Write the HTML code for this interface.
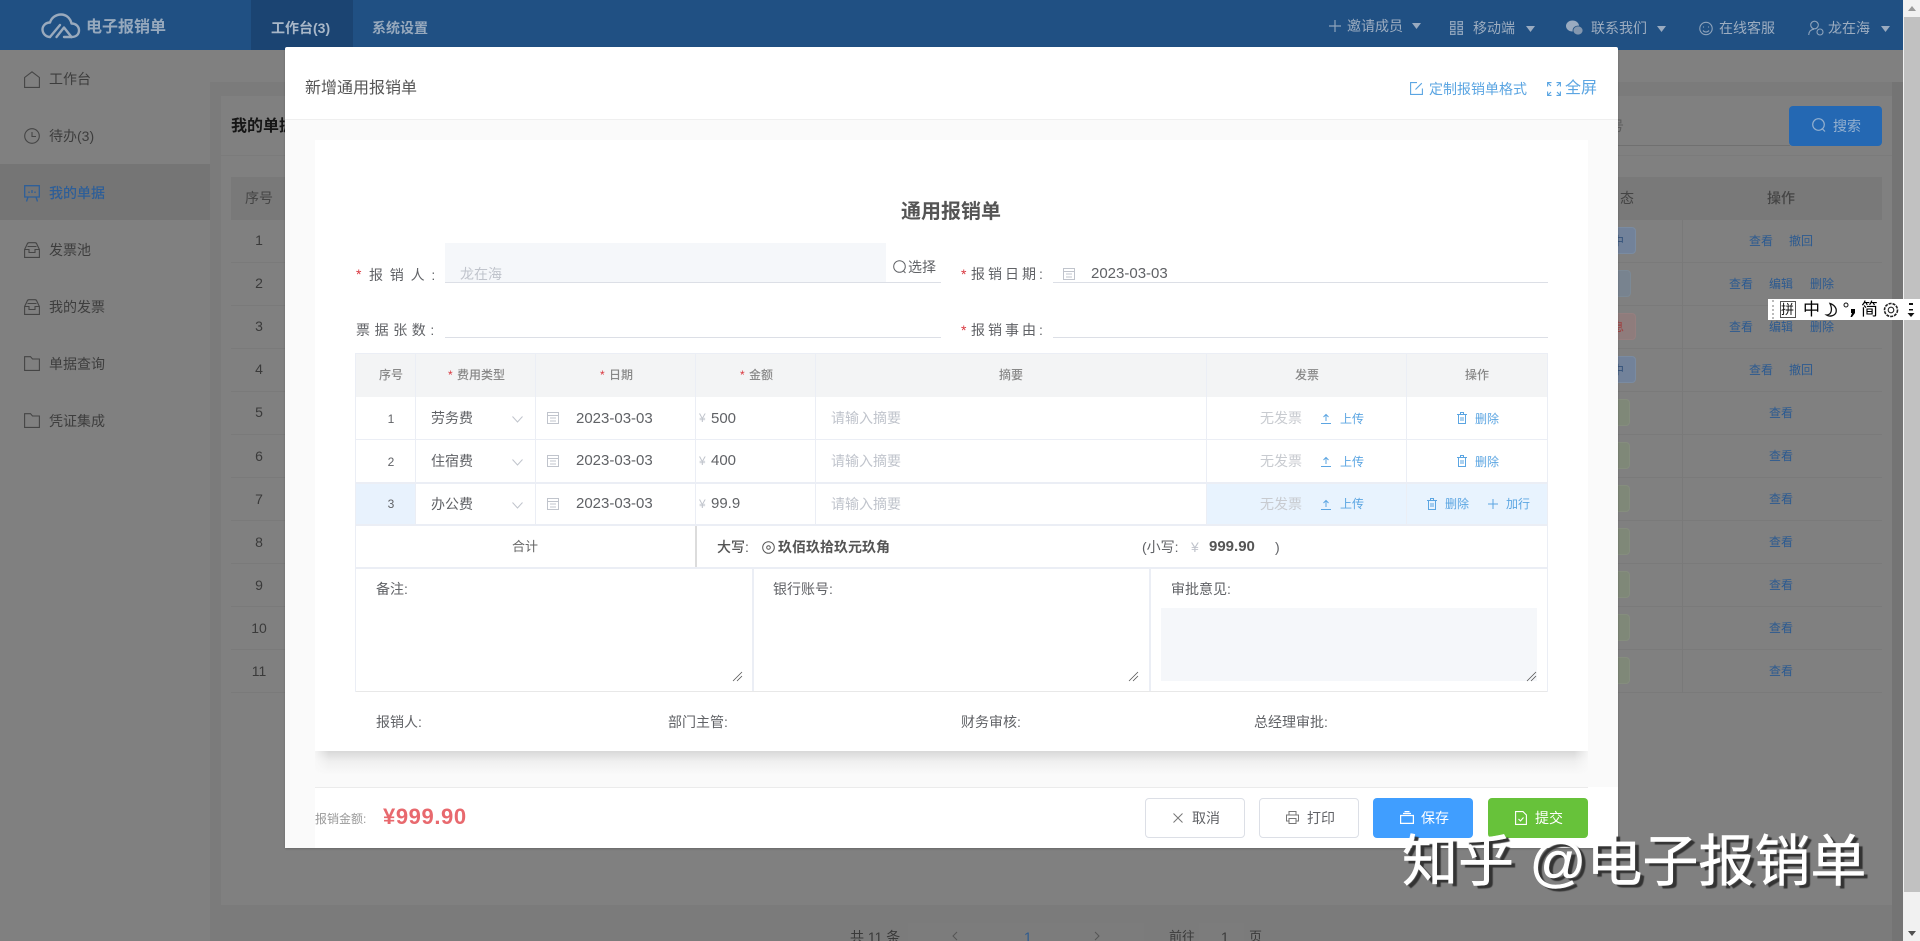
<!DOCTYPE html>
<html lang="zh"><head><meta charset="utf-8"><title>新增通用报销单</title>
<style>
*{box-sizing:border-box}
html,body{margin:0;padding:0;width:1920px;height:941px;overflow:hidden;background:#7f7f7f}
body{position:relative;font-family:"Liberation Sans","Noto Sans CJK SC",sans-serif;font-size:14px;color:#606266}
div{position:absolute}
.t{position:absolute;white-space:nowrap;line-height:20px;height:20px}
.c{transform:translateX(-50%)}
svg{position:absolute;overflow:visible;fill:none}
.nav{color:#9dadc0}
.s{color:#3d3d3d}
.ml{color:#2c5a90;font-size:12px}
.n{color:#3a3a3a}
.th{font-size:12px;color:#888;font-weight:500}
.r{color:#d9363e;font-size:12px}
.lab{color:#606266}
.gr{color:#c0c4cc}
.bl{color:#5ba5e2;font-size:12px}
.ln{background:#ebeef5}
.tag{border-radius:4px;left:1600px;height:27px}
.d{font-size:15px}
</style></head><body>

<!-- header -->
<div style="left:0;top:0;width:1904px;height:50px;background:#205083"></div>
<div style="left:251px;top:0;width:102px;height:50px;background:#1b4472"></div>
<svg style="left:41px;top:13px" width="40" height="26" stroke="#9aaabd" stroke-width="2.4" stroke-linecap="round" stroke-linejoin="round"><path d="M9 24C4.500 24 1.500 20 1.500 16.500S4.500 9.500 9 9.500C10.500 4.500 15 1.500 20 1.500 25.500 1.500 29.500 5.500 30.500 10.500 35 10.500 38 13.500 38 17.500S35 24 30.500 24H23"/><path d="M9 24L19 12"/><path d="M15.500 24L23 14.500 30.500 24"/></svg>
<span class="t nav" style="left:86px;top:18px;font-size:16px;font-weight:700;color:#97a9bd">电子报销单</span>
<span class="t nav" style="left:271px;top:18px;font-weight:700;color:#a8b7c8">工作台(3)</span>
<span class="t nav" style="left:372px;top:18px;font-weight:700;color:#97a9bd">系统设置</span>

<svg style="left:1328px;top:19px" width="14" height="14" stroke="#8ea3bb" stroke-width="1.2"><path d="M7 1V13M1 7H13"/></svg>
<span class="t nav" style="left:1347px;top:16px">邀请成员</span>
<svg style="left:1412px;top:23px" width="9" height="6"><path d="M0 0H9L4.500 6Z" fill="#9aabc0"/></svg>
<svg style="left:1450px;top:21px" width="13" height="14" stroke="#8ea3bb" stroke-width="1.2"><path d="M.6.600H5V3.500H.6ZM8 .6H12.400V3.500H8ZM.6 5.500H5V8.500H.6ZM8 5.500H12.400V8.500H8ZM.6 10.500H5V13.400H.6ZM8 10.500H12.400V13.400H8Z"/></svg>
<span class="t nav" style="left:1473px;top:18px">移动端</span>
<svg style="left:1526px;top:26px" width="9" height="6"><path d="M0 0H9L4.500 6Z" fill="#9aabc0"/></svg>
<svg style="left:1566px;top:20px" width="17" height="16"><ellipse cx="6.500" cy="6" rx="6.500" ry="5.500" fill="#9aabc0"/><ellipse cx="12" cy="10.500" rx="5" ry="4.500" fill="#8397af" stroke="#205083" stroke-width=".8"/></svg>
<span class="t nav" style="left:1591px;top:18px">联系我们</span>
<svg style="left:1657px;top:26px" width="9" height="6"><path d="M0 0H9L4.500 6Z" fill="#9aabc0"/></svg>
<svg style="left:1699px;top:21px" width="14" height="15" stroke="#8ea3bb" stroke-width="1.100"><circle cx="7" cy="7.500" r="6.200"/><path d="M4 9.500C5.500 11.500 8.500 11.500 10 9.500M4.500 5.500V6.500M9.500 5.500V6.500"/></svg>
<span class="t nav" style="left:1719px;top:18px">在线客服</span>
<svg style="left:1808px;top:20px" width="16" height="16" stroke="#8ea3bb" stroke-width="1.100"><circle cx="6.500" cy="5" r="3.800"/><path d="M.7 15C1 11 3 9.500 6 9.200"/><circle cx="12" cy="12" r="3"/></svg>
<span class="t nav" style="left:1828px;top:18px">龙在海</span>
<svg style="left:1881px;top:26px" width="9" height="6"><path d="M0 0H9L4.500 6Z" fill="#9aabc0"/></svg>

<!-- sidebar -->
<div style="left:0;top:50px;width:210px;height:891px;background:#808080"></div>
<div style="left:0;top:164px;width:210px;height:56px;background:#757575"></div>
<svg style="left:24px;top:71px" width="16" height="17" stroke="#454545" stroke-width="1.100"><path d="M.6 16.400V6.500L8 .8 15.400 6.500V16.400Z"/></svg>
<span class="t s" style="left:49px;top:69px">工作台</span>
<svg style="left:24px;top:128px" width="16" height="16" stroke="#454545" stroke-width="1.100"><circle cx="8" cy="8" r="7.300"/><path d="M8 4V8.500H12"/></svg>
<span class="t s" style="left:49px;top:126px">待办(3)</span>
<svg style="left:24px;top:185px" width="16" height="17" stroke="#2e5f99" stroke-width="1.300"><path d="M.7.700H15.300V12H.7ZM4 12L2.500 16.500M12 12L13.500 16.500M5 8V6.500M8 8V5M11 8V6.500"/></svg>
<span class="t" style="left:49px;top:183px;color:#2d5e98;font-weight:500">我的单据</span>
<svg style="left:24px;top:242px" width="16" height="16" stroke="#454545" stroke-width="1.100"><path d="M.6 15.400V7.500L3 2.500Q3.500.7 5 .7H11Q12.500.7 13 2.500L15.400 7.500V15.400ZM.6 7.500H5V10.500H11V7.500H15.400M3.500 4.500H12.500"/></svg>
<span class="t s" style="left:49px;top:240px">发票池</span>
<svg style="left:24px;top:299px" width="16" height="16" stroke="#454545" stroke-width="1.100"><path d="M.6 15.400V7.500L3 2.500Q3.500.7 5 .7H11Q12.500.7 13 2.500L15.400 7.500V15.400ZM.6 7.500H5V10.500H11V7.500H15.400M3.500 4.500H12.500"/></svg>
<span class="t s" style="left:49px;top:297px">我的发票</span>
<svg style="left:24px;top:356px" width="16" height="15" stroke="#454545" stroke-width="1.100"><path d="M.6 14.400V.7H6.500L8.500 3H15.400V14.400Z"/></svg>
<span class="t s" style="left:49px;top:354px">单据查询</span>
<svg style="left:24px;top:413px" width="16" height="15" stroke="#454545" stroke-width="1.100"><path d="M.6 14.400V.7H6.500L8.500 3H15.400V14.400Z"/></svg>
<span class="t s" style="left:49px;top:411px">凭证集成</span>

<!-- main -->
<div style="left:210px;top:50px;width:1694px;height:32px;background:#808080"></div>
<div style="left:210px;top:82px;width:1694px;height:859px;background:#7b7b7b"></div>
<div style="left:221px;top:96px;width:1671px;height:809px;background:#808080"></div>
<div style="left:221px;top:155px;width:1671px;height:1px;background:#7b7b7b"></div>
<div style="left:1892px;top:82px;width:12px;height:859px;background:#747474"></div>
<span class="t" style="left:231px;top:117px;font-size:16px;font-weight:700;color:#161616">我的单据</span>
<div style="left:1560px;top:145px;width:230px;height:1px;background:#707070"></div>
<span class="t" style="left:1610px;top:116px;color:#5d5d5d">号</span>
<div style="left:1789px;top:106px;width:93px;height:40px;background:#2468b3;border-radius:4px"></div>
<svg style="left:1812px;top:118px" width="14" height="15" stroke="#94b0cf" stroke-width="1.200"><circle cx="6.500" cy="6.500" r="5.800"/><path d="M10.500 11L13 13.500"/></svg>
<span class="t" style="left:1833px;top:116px;color:#94b0cf">搜索</span>

<div style="left:231px;top:177px;width:1651px;height:43px;background:#797979"></div>
<div style="left:231px;top:220px;width:1651px;height:473px;background:repeating-linear-gradient(#808080 0,#808080 42px,#7a7a7a 42px,#7a7a7a 43px)"></div>
<div style="left:1682px;top:177px;width:1px;height:516px;background:#797979"></div>
<span class="t c" style="left:259px;top:188px;color:#444">序号</span>
<span class="t" style="left:1620px;top:188px;color:#444">态</span>
<span class="t c" style="left:1781px;top:188px;color:#444;font-weight:500">操作</span>

<span class="t c n" style="left:259px;top:230px">1</span><span class="t c n" style="left:259px;top:273px">2</span><span class="t c n" style="left:259px;top:316px">3</span><span class="t c n" style="left:259px;top:359px">4</span><span class="t c n" style="left:259px;top:402px">5</span><span class="t c n" style="left:259px;top:446px">6</span><span class="t c n" style="left:259px;top:489px">7</span><span class="t c n" style="left:259px;top:532px">8</span><span class="t c n" style="left:259px;top:575px">9</span><span class="t c n" style="left:259px;top:618px">10</span><span class="t c n" style="left:259px;top:661px">11</span>

<div class="tag" style="top:227px;width:36px;background:#72829a;border:1px solid #7a8ba1"></div>
<div class="tag" style="top:270px;width:31px;background:#78838f;border:1px solid #7c8995"></div>
<div class="tag" style="top:313px;width:36px;background:#8f7c7c;border:1px solid #957f7f"></div>
<div class="tag" style="top:356px;width:36px;background:#72829a;border:1px solid #7a8ba1"></div>
<div class="tag" style="top:399px;width:30px;background:#7f8878;border:1px solid #858d7e"></div>
<div class="tag" style="top:442px;width:30px;background:#7f8878;border:1px solid #858d7e"></div>
<div class="tag" style="top:485px;width:30px;background:#7f8878;border:1px solid #858d7e"></div>
<div class="tag" style="top:528px;width:30px;background:#7f8878;border:1px solid #858d7e"></div>
<div class="tag" style="top:571px;width:30px;background:#7f8878;border:1px solid #858d7e"></div>
<div class="tag" style="top:614px;width:30px;background:#7f8878;border:1px solid #858d7e"></div>
<div class="tag" style="top:657px;width:30px;background:#7f8878;border:1px solid #858d7e"></div>
<span class="t" style="left:1612px;top:231px;color:#34527a;font-size:12px">中</span>
<span class="t" style="left:1612px;top:317px;color:#a04040;font-size:12px">息</span>
<span class="t" style="left:1612px;top:360px;color:#34527a;font-size:12px">中</span>

<span class="t ml" style="left:1749px;top:231px">查看</span><span class="t ml" style="left:1789px;top:231px">撤回</span>
<span class="t ml" style="left:1729px;top:274px">查看</span><span class="t ml" style="left:1769px;top:274px">编辑</span><span class="t ml" style="left:1810px;top:274px">删除</span>
<span class="t ml" style="left:1729px;top:317px">查看</span><span class="t ml" style="left:1769px;top:317px">编辑</span><span class="t ml" style="left:1810px;top:317px">删除</span>
<span class="t ml" style="left:1749px;top:360px">查看</span><span class="t ml" style="left:1789px;top:360px">撤回</span>
<span class="t ml" style="left:1769px;top:403px">查看</span><span class="t ml" style="left:1769px;top:446px">查看</span><span class="t ml" style="left:1769px;top:489px">查看</span><span class="t ml" style="left:1769px;top:532px">查看</span><span class="t ml" style="left:1769px;top:575px">查看</span><span class="t ml" style="left:1769px;top:618px">查看</span><span class="t ml" style="left:1769px;top:661px">查看</span>

<!-- pagination -->
<div style="left:908px;top:923px;width:236px;height:18px;background:#7c7c7c"></div>
<div style="left:1199px;top:923px;width:45px;height:18px;background:#7c7c7c"></div>
<span class="t" style="left:850px;top:927px;color:#3a3a3a">共 11 条</span>
<svg style="left:952px;top:932px" width="6" height="9" stroke="#555"><path d="M5 0L1 4 5 8"/></svg>
<span class="t" style="left:1024px;top:927px;color:#2c5a90">1</span>
<svg style="left:1094px;top:932px" width="6" height="9" stroke="#555"><path d="M1 0L5 4 1 8"/></svg>
<span class="t" style="left:1169px;top:927px;color:#3a3a3a;font-size:13px">前往</span>
<span class="t" style="left:1221px;top:927px;color:#3a3a3a">1</span>
<span class="t" style="left:1249px;top:927px;color:#3a3a3a;font-size:13px">页</span>

<!-- scrollbar -->
<div style="left:1903px;top:0;width:17px;height:941px;background:#f1f1f1"></div>
<div style="left:1904px;top:17px;width:16px;height:875px;background:#c1c1c1"></div>
<svg style="left:1908px;top:6px" width="8" height="5"><path d="M0 5H8L4 0Z" fill="#9a9a9a"/></svg>
<svg style="left:1908px;top:931px" width="8" height="5"><path d="M0 0H8L4 5Z" fill="#505050"/></svg>

<!-- IME bar -->
<div style="left:1768px;top:299px;width:152px;height:21px;background:#fff"></div>
<div style="left:1772px;top:300px;width:0;height:19px;border-left:2px dotted #bbb"></div>
<div style="left:1780px;top:301px;width:16px;height:17px;border:1px solid #555"></div>
<span class="t" style="left:1781px;top:300px;font-size:13px;color:#111">拼</span>
<span class="t" style="left:1803px;top:300px;font-size:17px;color:#000">中</span>
<svg style="left:1825px;top:302px" width="13" height="16" stroke="#111" stroke-width="1.300"><path d="M5 1.500C10 3 12 7 11 10.500 9.500 14 4.500 15 1.500 13 6 13 8 8 5 1.500Z"/></svg>
<svg style="left:1843px;top:302px" width="6" height="6" stroke="#111"><circle cx="3" cy="3" r="2"/></svg>
<svg style="left:1850px;top:309px" width="6" height="9"><path d="M1 0H5V4L2 8H.5L2 4H1Z" fill="#000"/></svg>
<span class="t" style="left:1861px;top:300px;font-size:17px;color:#000">简</span>
<svg style="left:1883px;top:302px" width="16" height="16" stroke="#222" stroke-width="1.600" stroke-dasharray="3 1"><circle cx="8" cy="8" r="6.500"/><circle cx="8" cy="8" r="2.800" stroke-width="1.100" stroke-dasharray="none"/></svg>
<svg style="left:1907px;top:303px" width="8" height="14"><path d="M2 0H6V2H2ZM2 6H6V7.500H2ZM.5 10H7.500L4 14Z" fill="#111"/></svg>

<!-- modal -->
<div style="left:285px;top:47px;width:1333px;height:801px;background:#fff;border-radius:2px;box-shadow:0 1px 2px rgba(0,0,0,.2)"></div>
<div style="left:285px;top:119px;width:1333px;height:668px;background:#fafafa;border-top:1px solid #efefef"></div>
<div style="left:285px;top:787px;width:30px;height:61px;background:#fafafa"></div>
<span class="t" style="left:305px;top:79px;font-size:16px;color:#555">新增通用报销单</span>
<svg style="left:1410px;top:82px" width="13" height="13" stroke="#5ba5e2" stroke-width="1.100"><path d="M12.400 6.500V12.400H.6V.6H7M5.500 7.500L11.800 1.200"/></svg>
<span class="t" style="left:1429px;top:79px;color:#5ba5e2">定制报销单格式</span>
<svg style="left:1547px;top:82px" width="14" height="14" stroke="#5ba5e2" stroke-width="1.100"><path d="M.6 4.500V.6H4.500M.8.800L4 4M9.500.6H13.400V4.500M13.200.8L10 4M.6 9.500V13.400H4.500M.8 13.200L4 10M9.500 13.400H13.400V9.500M13.200 13.200L10 10"/></svg>
<span class="t" style="left:1565px;top:79px;font-size:16px;color:#5ba5e2">全屏</span>

<!-- paper -->
<div style="left:315px;top:140px;width:1273px;height:611px;background:#fff"></div>
<div style="left:315px;top:751px;width:1273px;height:34px;background:linear-gradient(#d8d8d8,#efefef 30%,#fafafa 70%)"></div>
<div style="left:315px;top:751px;width:14px;height:34px;background:linear-gradient(90deg,rgba(250,250,250,.85),rgba(250,250,250,0))"></div>
<div style="left:1574px;top:751px;width:14px;height:34px;background:linear-gradient(270deg,rgba(250,250,250,.85),rgba(250,250,250,0))"></div>
<span class="t c" style="left:951px;top:202px;font-size:20px;font-weight:700;color:#555">通用报销单</span>

<span class="t r" style="left:356px;top:264px;font-size:14px">*</span>
<span class="t lab" style="left:369px;top:265px;letter-spacing:6.800px">报销人:</span>
<div style="left:445px;top:243px;width:441px;height:39px;background:#f5f7fa"></div>
<div style="left:445px;top:282px;width:496px;height:1px;background:#dcdfe6"></div>
<span class="t gr" style="left:460px;top:264px">龙在海</span>
<svg style="left:893px;top:260px" width="13" height="14" stroke="#606266" stroke-width="1"><circle cx="6.500" cy="6.500" r="5.800"/><path d="M10.500 11L12.500 13"/></svg>
<span class="t lab" style="left:908px;top:257px">选择</span>
<span class="t r" style="left:961px;top:264px;font-size:14px">*</span>
<span class="t lab" style="left:971px;top:264px;letter-spacing:3px">报销日期:</span>
<div style="left:1053px;top:282px;width:495px;height:1px;background:#dcdfe6"></div>
<svg style="left:1063px;top:267px" width="12" height="13" stroke="#c0c4cc"><path d="M.5 1.500H11.500V12.500H.5ZM.5 4.500H11.500M3 7H9M3 10H9"/></svg>
<span class="t lab d" style="left:1091px;top:264px">2023-03-03</span>

<span class="t lab" style="left:356px;top:320px;letter-spacing:4.600px">票据张数:</span>
<div style="left:445px;top:337px;width:496px;height:1px;background:#dcdfe6"></div>
<span class="t r" style="left:961px;top:320px;font-size:14px">*</span>
<span class="t lab" style="left:971px;top:320px;letter-spacing:3px">报销事由:</span>
<div style="left:1053px;top:337px;width:495px;height:1px;background:#dcdfe6"></div>

<!-- table -->
<div style="left:356px;top:353px;width:1192px;height:44px;background:#f3f4f5"></div>
<div style="left:356px;top:483px;width:60px;height:42px;background:#e8f2fd"></div>
<div style="left:1206px;top:483px;width:342px;height:42px;background:#e8f3fe"></div>
<div class="ln" style="left:355px;top:353px;width:1193px;height:1px"></div>
<div class="ln" style="left:356px;top:439px;width:1192px;height:1px"></div>
<div class="ln" style="left:356px;top:482px;width:1192px;height:2px"></div>
<div class="ln" style="left:356px;top:524px;width:1192px;height:2px"></div>
<div class="ln" style="left:356px;top:567px;width:1192px;height:2px"></div>
<div class="ln" style="left:356px;top:691px;width:1192px;height:1px;background:#e8e8e8"></div>
<div class="ln" style="left:355px;top:353px;width:1px;height:339px"></div>
<div class="ln" style="left:1547px;top:353px;width:1px;height:339px"></div>
<div class="ln" style="left:415px;top:353px;width:1px;height:172px"></div>
<div class="ln" style="left:535px;top:353px;width:1px;height:172px"></div>
<div class="ln" style="left:695px;top:353px;width:1px;height:172px"></div>
<div class="ln" style="left:815px;top:353px;width:1px;height:172px"></div>
<div class="ln" style="left:1206px;top:353px;width:1px;height:172px"></div>
<div class="ln" style="left:1406px;top:353px;width:1px;height:172px"></div>
<div style="left:695px;top:526px;width:2px;height:41px;background:#dcdcdc"></div>
<div class="ln" style="left:752px;top:569px;width:2px;height:122px"></div>
<div class="ln" style="left:1149px;top:569px;width:2px;height:122px"></div>

<span class="t c th" style="left:391px;top:365px">序号</span>
<span class="t r" style="left:448px;top:365px">*</span><span class="t th" style="left:457px;top:365px">费用类型</span>
<span class="t r" style="left:600px;top:365px">*</span><span class="t th" style="left:609px;top:365px">日期</span>
<span class="t r" style="left:740px;top:365px">*</span><span class="t th" style="left:749px;top:365px">金额</span>
<span class="t th" style="left:999px;top:365px">摘要</span>
<span class="t c th" style="left:1307px;top:365px">发票</span>
<span class="t c th" style="left:1477px;top:365px">操作</span>

<span class="t c" style="left:391px;top:409px;font-size:12px">1</span>
<span class="t" style="left:431px;top:408px">劳务费</span>
<svg style="left:512px;top:416px" width="11" height="7" stroke="#c0c4cc"><path d="M.5.500L5.500 6 10.500.5"/></svg>
<svg style="left:547px;top:411px" width="12" height="13" stroke="#c0c4cc"><path d="M.5 1.500H11.500V12.500H.5ZM.5 4.500H11.500M3 7H9M3 10H9"/></svg>
<span class="t d" style="left:576px;top:409px">2023-03-03</span>
<span class="t gr" style="left:699px;top:408px;font-size:12px">¥</span>
<span class="t d" style="left:711px;top:409px">500</span>
<span class="t gr" style="left:831px;top:408px">请输入摘要</span>
<span class="t" style="left:1260px;top:408px;color:#c8cbd0">无发票</span>
<svg style="left:1321px;top:413px" width="10" height="11" stroke="#5ba5e2"><path d="M0 10.500H10M5 8V1.500M2.500 4L5 1.500 7.500 4"/></svg>
<span class="t bl" style="left:1340px;top:409px">上传</span>
<svg style="left:1457px;top:412px" width="10" height="12" stroke="#5ba5e2"><path d="M0 2.500H10M3.500 2.500V.5H6.500V2.500M1.500 2.500V11.500H8.500V2.500M4 5V9M6 5V9"/></svg>
<span class="t bl" style="left:1475px;top:409px">删除</span>

<span class="t c" style="left:391px;top:452px;font-size:12px">2</span>
<span class="t" style="left:431px;top:451px">住宿费</span>
<svg style="left:512px;top:459px" width="11" height="7" stroke="#c0c4cc"><path d="M.5.500L5.500 6 10.500.5"/></svg>
<svg style="left:547px;top:454px" width="12" height="13" stroke="#c0c4cc"><path d="M.5 1.500H11.500V12.500H.5ZM.5 4.500H11.500M3 7H9M3 10H9"/></svg>
<span class="t d" style="left:576px;top:451px">2023-03-03</span>
<span class="t gr" style="left:699px;top:451px;font-size:12px">¥</span>
<span class="t d" style="left:711px;top:451px">400</span>
<span class="t gr" style="left:831px;top:451px">请输入摘要</span>
<span class="t" style="left:1260px;top:451px;color:#c8cbd0">无发票</span>
<svg style="left:1321px;top:456px" width="10" height="11" stroke="#5ba5e2"><path d="M0 10.500H10M5 8V1.500M2.500 4L5 1.500 7.500 4"/></svg>
<span class="t bl" style="left:1340px;top:452px">上传</span>
<svg style="left:1457px;top:455px" width="10" height="12" stroke="#5ba5e2"><path d="M0 2.500H10M3.500 2.500V.5H6.500V2.500M1.500 2.500V11.500H8.500V2.500M4 5V9M6 5V9"/></svg>
<span class="t bl" style="left:1475px;top:452px">删除</span>

<span class="t c" style="left:391px;top:494px;font-size:12px">3</span>
<span class="t" style="left:431px;top:494px">办公费</span>
<svg style="left:512px;top:502px" width="11" height="7" stroke="#c0c4cc"><path d="M.5.500L5.500 6 10.500.5"/></svg>
<svg style="left:547px;top:497px" width="12" height="13" stroke="#c0c4cc"><path d="M.5 1.500H11.500V12.500H.5ZM.5 4.500H11.500M3 7H9M3 10H9"/></svg>
<span class="t d" style="left:576px;top:494px">2023-03-03</span>
<span class="t gr" style="left:699px;top:494px;font-size:12px">¥</span>
<span class="t d" style="left:711px;top:494px">99.9</span>
<span class="t gr" style="left:831px;top:494px">请输入摘要</span>
<span class="t" style="left:1260px;top:494px;color:#c8cbd0">无发票</span>
<svg style="left:1321px;top:499px" width="10" height="11" stroke="#5ba5e2"><path d="M0 10.500H10M5 8V1.500M2.500 4L5 1.500 7.500 4"/></svg>
<span class="t bl" style="left:1340px;top:494px">上传</span>
<svg style="left:1427px;top:498px" width="10" height="12" stroke="#5ba5e2"><path d="M0 2.500H10M3.500 2.500V.5H6.500V2.500M1.500 2.500V11.500H8.500V2.500M4 5V9M6 5V9"/></svg>
<span class="t bl" style="left:1445px;top:494px">删除</span>
<svg style="left:1488px;top:499px" width="10" height="10" stroke="#5ba5e2"><path d="M5 0V10M0 5H10"/></svg>
<span class="t bl" style="left:1506px;top:494px">加行</span>

<span class="t c" style="left:525px;top:537px;font-size:13px;color:#666">合计</span>
<span class="t" style="left:717px;top:537px;color:#555;font-weight:500">大写:</span>
<svg style="left:762px;top:541px" width="13" height="13" stroke="#555"><circle cx="6.500" cy="6.500" r="5.800"/><circle cx="6.500" cy="6.500" r="1.800"/></svg>
<span class="t" style="left:778px;top:537px;color:#555;font-weight:700">玖佰玖拾玖元玖角</span>
<span class="t" style="left:1142px;top:537px;color:#606266">(小写:</span>
<span class="t gr" style="left:1191px;top:537px">¥</span>
<span class="t d" style="left:1209px;top:537px;color:#555;font-weight:700">999.90</span>
<span class="t" style="left:1275px;top:537px;color:#606266">)</span>

<span class="t lab" style="left:376px;top:579px">备注:</span>
<span class="t lab" style="left:773px;top:579px">银行账号:</span>
<span class="t lab" style="left:1171px;top:579px">审批意见:</span>
<div style="left:1161px;top:608px;width:376px;height:73px;background:#f5f7fa"></div>
<svg style="left:733px;top:672px" width="9" height="9" stroke="#555" stroke-width=".8"><path d="M0 9L9 0M4 9L9 4"/></svg>
<svg style="left:1129px;top:672px" width="9" height="9" stroke="#555" stroke-width=".8"><path d="M0 9L9 0M4 9L9 4"/></svg>
<svg style="left:1527px;top:672px" width="9" height="9" stroke="#555" stroke-width=".8"><path d="M0 9L9 0M4 9L9 4"/></svg>

<span class="t lab" style="left:376px;top:712px">报销人:</span>
<span class="t lab" style="left:668px;top:712px">部门主管:</span>
<span class="t lab" style="left:961px;top:712px">财务审核:</span>
<span class="t lab" style="left:1254px;top:712px">总经理审批:</span>

<!-- footer -->
<div style="left:315px;top:787px;width:1273px;height:1px;background:#ebebeb"></div>
<span class="t" style="left:315px;top:809px;font-size:12px;color:#999">报销金额:</span>
<span class="t" style="left:383px;top:806px;font-size:22px;letter-spacing:.6px;font-weight:700;color:#e8696e;line-height:22px">¥999.90</span>

<div style="left:1145px;top:798px;width:100px;height:40px;background:#fff;border:1px solid #dcdfe6;border-radius:4px"></div>
<svg style="left:1173px;top:813px" width="10" height="10" stroke="#777"><path d="M.5.500L9.500 9.500M9.500.5L.5 9.500"/></svg>
<span class="t" style="left:1192px;top:808px">取消</span>
<div style="left:1259px;top:798px;width:100px;height:40px;background:#fff;border:1px solid #dcdfe6;border-radius:4px"></div>
<svg style="left:1286px;top:811px" width="13" height="13" stroke="#777"><path d="M3 4V.5H10V4M3 10H.5V4H12.500V10H10M3 7.500H10V12.500H3Z"/></svg>
<span class="t" style="left:1307px;top:808px">打印</span>
<div style="left:1373px;top:798px;width:100px;height:40px;background:#409eff;border-radius:4px"></div>
<svg style="left:1400px;top:811px" width="14" height="13" stroke="#fff" stroke-width="1.200"><path d="M.6 4.500H13.400V12.400H.6ZM3 2.500H11M4.500.6H9.500"/></svg>
<span class="t" style="left:1421px;top:808px;color:#fff">保存</span>
<div style="left:1488px;top:798px;width:100px;height:40px;background:#67c23a;border-radius:4px"></div>
<svg style="left:1515px;top:811px" width="12" height="14" stroke="#fff" stroke-width="1.100"><path d="M.6.600H8L11.400 4V13.400H.6ZM3.500 8L5.500 10 8.500 6.500"/></svg>
<span class="t" style="left:1535px;top:808px;color:#fff">提交</span>

<!-- watermark -->
<span class="t" style="left:1402px;top:832px;height:60px;line-height:60px;font-size:56px;color:#fff;-webkit-text-stroke:.5px #fff;text-shadow:4px 3px 1px #333">知乎 @电子报销单</span>

</body></html>
